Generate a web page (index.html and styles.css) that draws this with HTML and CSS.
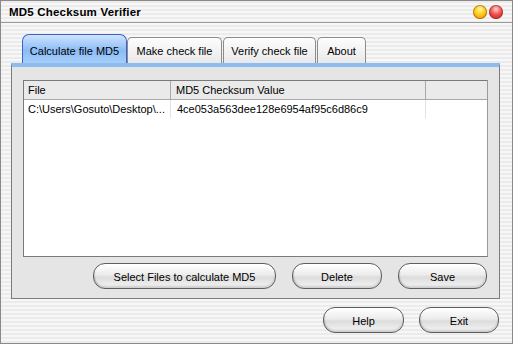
FILE: index.html
```html
<!DOCTYPE html>
<html lang="en">
<head>
    <meta charset="UTF-8">
    <title>MD5 Checksum Verifier</title>
    <link rel="stylesheet" href="styles.css">
</head>
<body>
    <div class="window">
        <div class="titlebar">
            <span class="title">MD5 Checksum Verifier</span>
            <div class="lights">
                <span class="light yellow"></span>
                <span class="light red"></span>
            </div>
        </div>

        <div class="tabs">
            <div class="tab active t-calc">Calculate file MD5</div>
            <div class="tab t-make">Make check file</div>
            <div class="tab t-verify">Verify check file</div>
            <div class="tab t-about">About</div>
        </div>

        <div class="panel">
            <div class="list">
                <div class="row head">
                    <div class="cell c-file">File</div>
                    <div class="cell c-md5">MD5 Checksum Value</div>
                    <div class="cell c-rest"></div>
                </div>
                <div class="row">
                    <div class="cell c-file">C:\Users\Gosuto\Desktop\...</div>
                    <div class="cell c-md5">4ce053a563dee128e6954af95c6d86c9</div>
                    <div class="cell c-rest"></div>
                </div>
            </div>
            <div class="actions">
                <button class="pill w-select">Select Files to calculate MD5</button>
                <button class="pill w-delete">Delete</button>
                <button class="pill w-save">Save</button>
            </div>
        </div>

        <div class="footer">
            <button class="pill w-help">Help</button>
            <button class="pill w-exit">Exit</button>
        </div>
    </div>
</body>
</html>
```

FILE: styles.css
```css
body {
    margin: 0;
    font-family: "Liberation Sans", Arial, sans-serif;
    font-size: 11px;
    color: #000;
}

.window {
    width: 513px;
    height: 344px;
    box-sizing: border-box;
    border: 1px solid #8a8a8a;
    background: repeating-linear-gradient(to bottom, #ebebeb 0, #ebebeb 2px, #f7f7f7 2px, #f7f7f7 4px);
    display: flex;
    flex-direction: column;
}

.titlebar {
    height: 21px;
    border-bottom: 1px solid #9a9a9a;
    display: flex;
    align-items: center;
    justify-content: space-between;
    padding: 0 9px 0 8px;
}

.title {
    font-weight: bold;
    font-size: 11.5px;
    letter-spacing: 0.2px;
}

.lights {
    display: flex;
    gap: 2px;
}

.light {
    width: 14px;
    height: 14px;
    border-radius: 50%;
    box-shadow: inset 0 0 0 1px rgba(120, 40, 0, 0.45);
}

.yellow {
    background: radial-gradient(circle at 50% 30%, #fff6b0 0, #ffd21e 40%, #e88a00 100%);
}

.red {
    background: radial-gradient(circle at 50% 30%, #ffd0d0 0, #f05050 45%, #c01818 100%);
}

.tabs {
    display: flex;
    align-items: flex-end;
    padding-left: 21px;
    margin-top: 11px;
    height: 29px;
}

.tab {
    height: 26px;
    box-sizing: border-box;
    border: 1px solid #8c8c8c;
    border-bottom: none;
    border-radius: 5px 5px 0 0;
    background: linear-gradient(to bottom, #fdfdfd, #e9e9e9);
    display: flex;
    align-items: center;
    justify-content: center;
    margin-right: 1px;
    white-space: nowrap;
}

.tab.active {
    height: 29px;
    border-color: #3c64c8;
    border-radius: 7px 7px 0 0;
    background: linear-gradient(to bottom, #cfe4ff, #8bbcf6 55%, #a6cdfb);
    padding-top: 3px;
    margin-right: 0;
}

.t-calc {
    width: 105px;
}

.t-make {
    width: 95px;
}

.t-verify {
    width: 93px;
}

.t-about {
    width: 49px;
}

.panel {
    margin-left: 10px;
    width: 489px;
    height: 236px;
    box-sizing: border-box;
    border: 1px solid #7c7c7c;
    border-top: 4px solid #8cbcf0;
    background: #e5e5e5;
    padding: 13px 11px 0 11px;
}

.list {
    height: 177px;
    box-sizing: border-box;
    border: 1px solid #7a7a7a;
    border-right-color: #9a9a9a;
    background: #fff;
}

.row {
    display: flex;
    height: 18px;
    align-items: center;
}

.row.head {
    background: #eaeaea;
    border-bottom: 1px solid #a8a8a8;
}

.cell {
    padding-left: 4px;
    height: 100%;
    display: flex;
    align-items: center;
    box-sizing: border-box;
    white-space: nowrap;
    overflow: hidden;
}

.row .cell + .cell {
    border-left: 1px solid #e2e2e2;
}

.row.head .cell + .cell {
    border-left: 1px solid #a8a8a8;
}

.c-file {
    width: 146px;
}

.c-md5 {
    width: 255px;
    padding-left: 5px;
}

.row:not(.head) .c-md5 {
    padding-left: 6px;
}

.c-rest {
    flex: 1;
}

.actions {
    display: flex;
    justify-content: flex-end;
    gap: 16px;
    margin-top: 6px;
    padding-right: 1px;
}

.footer {
    display: flex;
    justify-content: flex-end;
    gap: 15px;
    padding-right: 13px;
    margin-top: 8px;
}

.pill {
    font-family: "Liberation Sans", Arial, sans-serif;
    font-size: 11px;
    color: #000;
    height: 26px;
    border: 1px solid #5e5e5e;
    border-radius: 12px;
    background: linear-gradient(to bottom, #ffffff 0, #ececec 45%, #dcdcdc 55%, #f6f6f6 100%);
    box-shadow: inset 0 -2px 2px rgba(0, 0, 0, 0.15), inset 0 2px 1px #fff, inset 1px 0 1px rgba(0, 0, 0, 0.15);
    padding: 2px 0 0 0;
}

.w-select {
    width: 183px;
}

.w-delete {
    width: 90px;
}

.w-save {
    width: 89px;
}

.w-help {
    width: 81px;
}

.w-exit {
    width: 80px;
}
```
